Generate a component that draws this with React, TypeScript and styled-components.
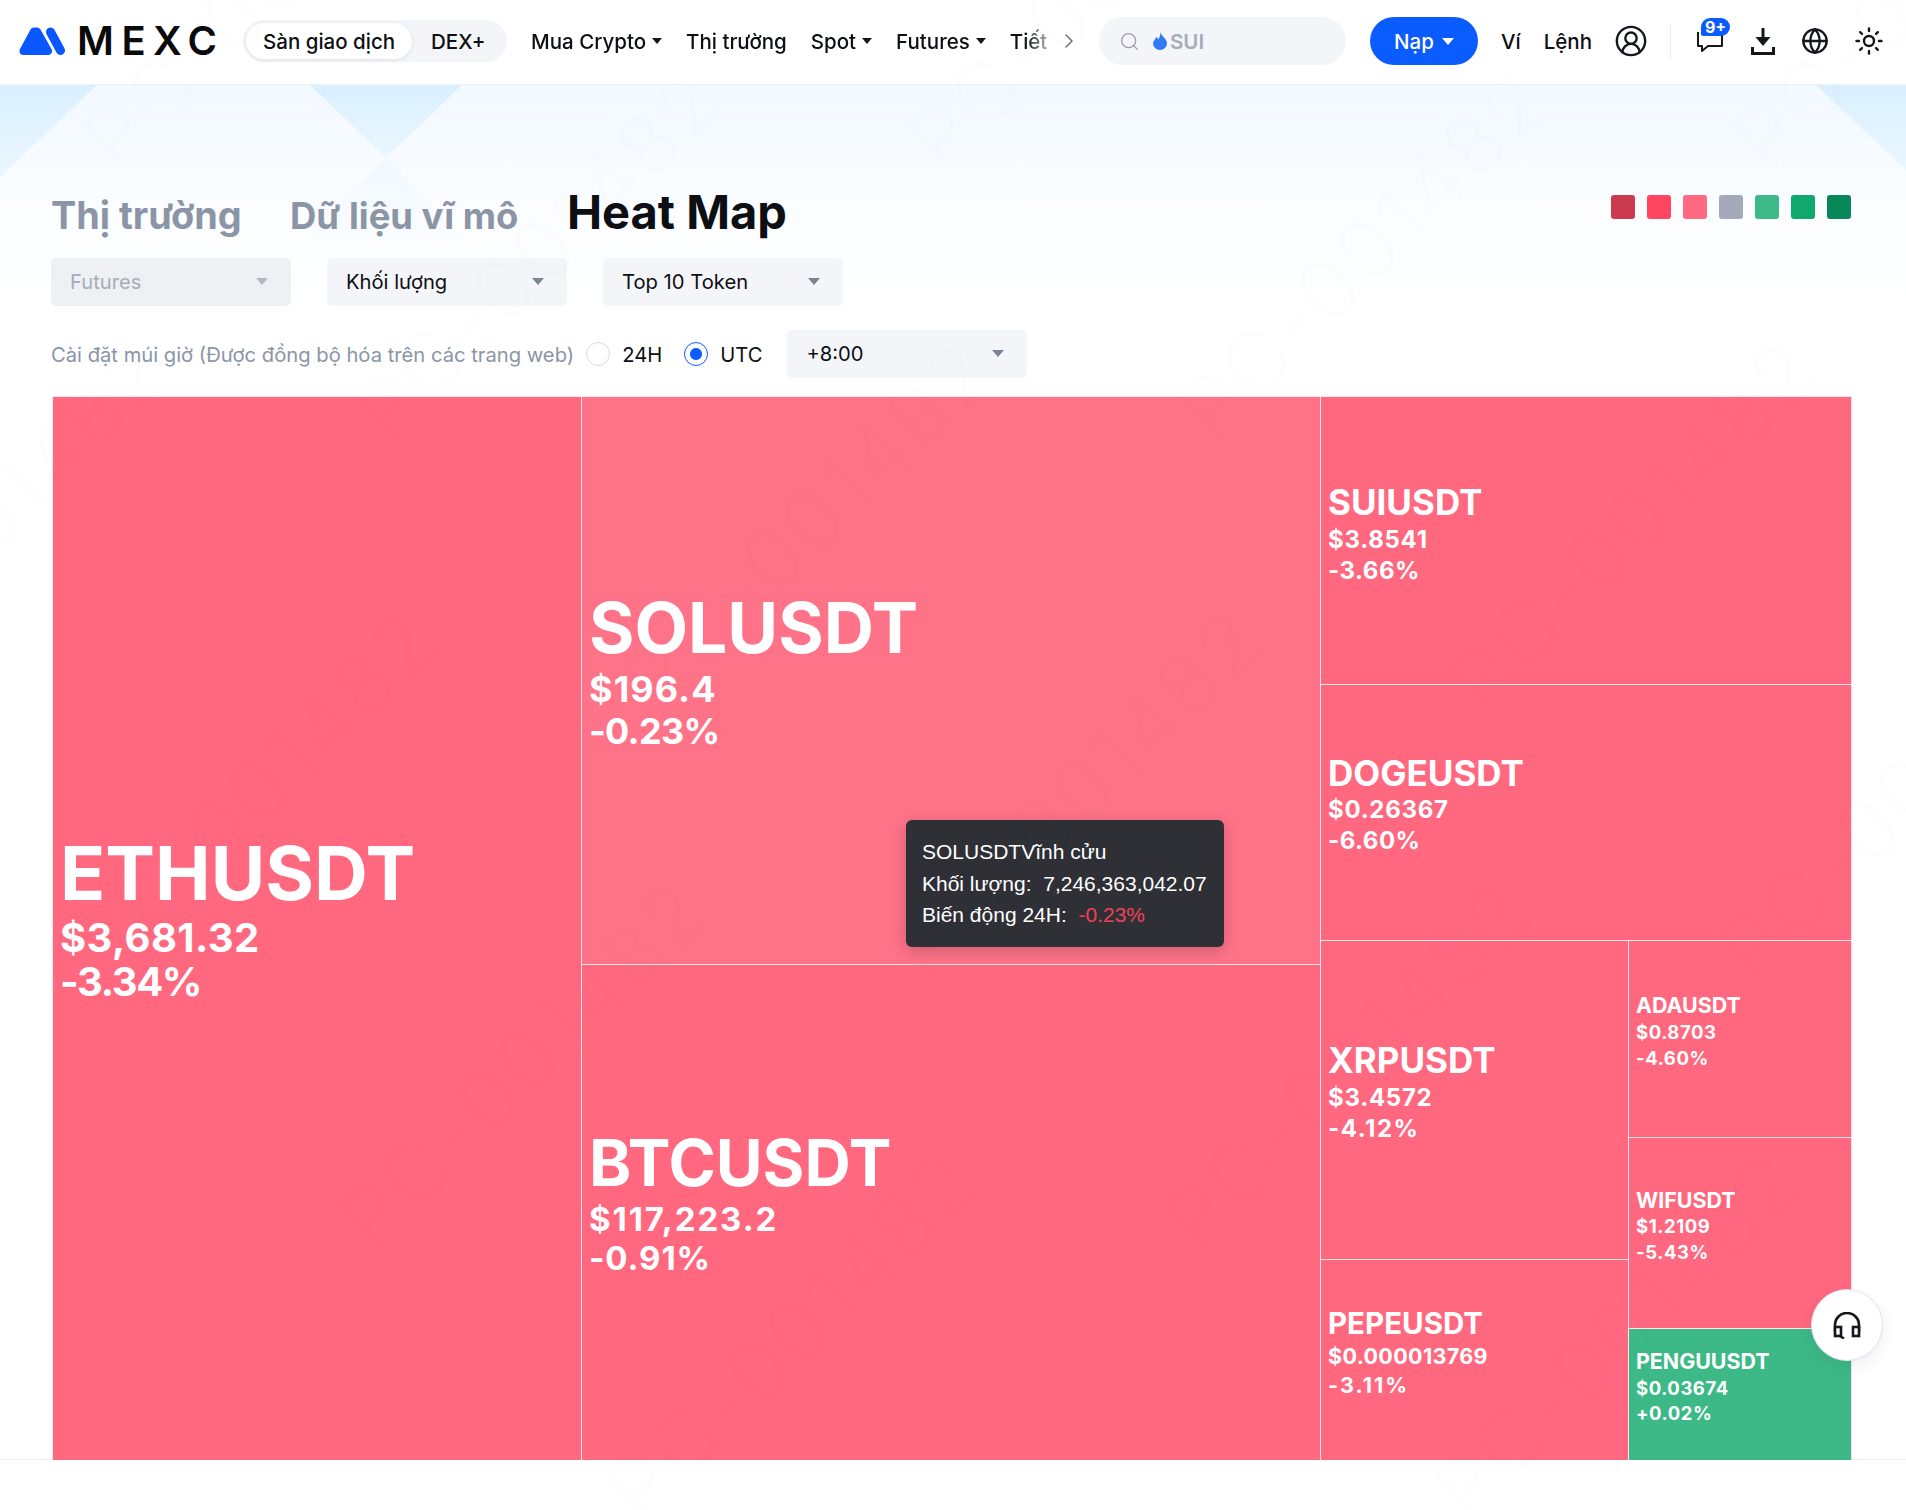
import styled, { createGlobalStyle } from "styled-components";
import { ChevronRight, CircleUserRound, Globe, Search, Sun } from "lucide-react";

const GlobalStyle = createGlobalStyle`
  html, body {
    margin: 0;
    padding: 0;
    background: #fff;
    overflow: hidden;
  }
  body {
    font-family: Inter, "Liberation Sans", sans-serif;
    color: #0d0f14;
  }
`;

const Page = styled.div`
  position: relative;
  width: 1906px;
  height: 1510px;
  overflow: hidden;
`;

const WatermarkLayer = styled.svg`
  position: absolute;
  inset: 0;
  z-index: 5;
  pointer-events: none;
  font-family: Inter, sans-serif;
  font-size: 84px;
  font-weight: 300;
  letter-spacing: 4px;
  fill: rgba(30, 40, 70, 0.007);
`;

/* top bar */
const HeaderBar = styled.header`
  position: relative;
  z-index: 2;
  display: flex;
  align-items: center;
  height: 85px;
  box-sizing: border-box;
  padding: 0 0 2px 19px;
  background: #fff;
  border-bottom: 1px solid #eef1f6;
  font-size: 20.5px;
  font-weight: 500;
`;

const LogoLink = styled.a`
  display: flex;
  align-items: center;
  gap: 11px;
  width: 224px;
`;

const WordMark = styled.span`
  font-size: 40px;
  line-height: 40px;
  font-weight: 600;
  letter-spacing: 7.5px;
  color: #0a0a0a;
`;

const MarketSwitch = styled.div`
  display: flex;
  align-items: center;
  width: 264px;
  height: 42px;
  box-sizing: border-box;
  padding: 3px;
  border-radius: 21px;
  background: #f4f5f9;
`;

const SwitchItem = styled.span<{ $active?: boolean }>`
  display: flex;
  align-items: center;
  justify-content: center;
  height: 36px;
  padding: 0 ${({ $active }) => ($active ? "17px" : "19px")};
  border-radius: 18px;
  white-space: nowrap;
  ${({ $active }) =>
    $active &&
    `
    background: #fff;
    box-shadow: 0 1px 4px rgba(30, 40, 70, 0.1);
  `}
`;

const NavList = styled.nav`
  display: flex;
  align-items: center;
  gap: 24px;
  width: 516px;
  margin-left: 24px;
  overflow: hidden;
  white-space: nowrap;
  mask-image: linear-gradient(to right, #000 calc(100% - 22px), rgba(0, 0, 0, 0.35));
`;

const NavItem = styled.span`
  display: flex;
  align-items: center;
  gap: 6px;
  flex-shrink: 0;
`;

const Caret = styled.i<{ $color?: string; $size?: number }>`
  display: block;
  width: 0;
  height: 0;
  border-left: ${({ $size = 5 }) => $size}px solid transparent;
  border-right: ${({ $size = 5 }) => $size}px solid transparent;
  border-top: ${({ $size = 5 }) => $size + 1}px solid ${({ $color = "#15171c" }) => $color};
`;

const NavMore = styled.span`
  display: flex;
  width: 42px;
  margin-left: 10px;
  color: #6d7280;
`;

const SearchBox = styled.div`
  display: flex;
  align-items: center;
  width: 247px;
  height: 48px;
  box-sizing: border-box;
  padding-left: 20px;
  border-radius: 24px;
  background: #f4f5f9;
  color: #a6acb9;
  font-weight: 600;
`;

const SearchHint = styled.span`
  display: flex;
  align-items: center;
  gap: 3px;
  margin-left: 13px;
`;

const DepositButton = styled.button`
  display: flex;
  align-items: center;
  justify-content: center;
  gap: 8px;
  width: 108px;
  height: 48px;
  margin-left: 24px;
  border: 0;
  border-radius: 24px;
  background: #0b5cff;
  color: #fff;
  font: inherit;
`;

const HeaderLink = styled.span<{ $gap: number }>`
  margin-left: ${({ $gap }) => $gap}px;
`;

const IconSlot = styled.span<{ $gap: number }>`
  position: relative;
  display: flex;
  margin-left: ${({ $gap }) => $gap}px;
`;

const Divider = styled.i`
  display: block;
  width: 1px;
  height: 35px;
  margin-left: 22px;
  background: #eff0f4;
`;

const CountBadge = styled.span`
  position: absolute;
  top: -13px;
  left: 4px;
  display: flex;
  align-items: center;
  justify-content: center;
  width: 29px;
  height: 18px;
  border-radius: 9px 9px 9px 2px;
  background: #0b5cff;
  color: #fff;
  font-size: 16px;
  font-weight: 700;
`;

/* page body */
const Main = styled.main`
  position: relative;
  height: 1374px;
  box-sizing: border-box;
  padding: 99px 55px 0 51px;
  background: linear-gradient(#f2f9ff 0, #fbfdff 130px, #fff 230px);
`;

const Decor = styled.svg`
  position: absolute;
  top: 0;
  left: 0;
  pointer-events: none;
`;

const TitleRow = styled.div`
  position: relative;
  display: flex;
  align-items: baseline;
  height: 74px;
`;

const Tab = styled.h2<{ $active?: boolean; $width?: number; $size: number }>`
  margin: 0;
  ${({ $width }) => $width && `width: ${$width}px;`}
  font-size: ${({ $size }) => $size}px;
  line-height: 56px;
  font-weight: 700;
  white-space: nowrap;
  color: ${({ $active }) => ($active ? "#0d0f14" : "#8b95a6")};
`;

const Legend = styled.div`
  display: flex;
  gap: 12px;
  align-self: flex-start;
  margin: 11px 0 0 auto;
`;

const Swatch = styled.i<{ $color: string }>`
  display: block;
  width: 24px;
  height: 24px;
  border-radius: 3px;
  background: ${({ $color }) => $color};
`;

const FilterRow = styled.div`
  position: relative;
  display: flex;
  gap: 36px;
`;

const Select = styled.div<{ $disabled?: boolean }>`
  display: flex;
  align-items: center;
  justify-content: space-between;
  width: 240px;
  height: 48px;
  box-sizing: border-box;
  padding: 0 23px 2px 19px;
  border-radius: 5px;
  font-size: 20.2px;
  background: ${({ $disabled }) => ($disabled ? "#eff0f4" : "#f4f5f9")};
  color: ${({ $disabled }) => ($disabled ? "#a6acb9" : "#0d0f14")};
`;

const TimezoneRow = styled.div`
  position: relative;
  display: flex;
  align-items: center;
  margin-top: 24px;
  font-size: 20.2px;
`;

const Muted = styled.span`
  color: #8b95a6;
  white-space: nowrap;
`;

const RadioLabel = styled.label<{ $gap: number }>`
  display: flex;
  align-items: center;
  gap: 12px;
  margin-left: ${({ $gap }) => $gap}px;
`;

const RadioDot = styled.i<{ $checked?: boolean }>`
  display: block;
  width: 24px;
  height: 24px;
  box-sizing: border-box;
  border-radius: 50%;
  border: 1px solid ${({ $checked }) => ($checked ? "#0b5cff" : "#d8dbe3")};
  background: ${({ $checked }) =>
    $checked ? "radial-gradient(circle, #0b5cff 0 5.5px, #fff 6.5px)" : "#fff"};
`;

const TimezoneSelect = styled(Select)`
  margin-left: 25px;
`;

/* treemap */
const TreeMap = styled.div`
  position: relative;
  display: flex;
  width: 1800px;
  height: 1064px;
  margin: 18px 0 0 1px;
  box-sizing: border-box;
  border-right: 1px solid #ffdfe4;
`;

const Stack = styled.div<{ $w?: number; $h?: number; $row?: boolean }>`
  display: flex;
  flex-direction: ${({ $row }) => ($row ? "row" : "column")};
  ${({ $w }) => ($w ? `width: ${$w}px; flex-shrink: 0;` : "flex: 1;")}
  ${({ $h }) => $h && `height: ${$h}px;`}
`;

const Tile = styled.div<{ $w?: number; $h?: number; $pad: number; $color: string }>`
  ${({ $w }) => $w && `width: ${$w}px;`}
  ${({ $h }) => ($h ? `height: ${$h}px;` : "flex: 1;")}
  flex-shrink: 0;
  box-sizing: border-box;
  padding: ${({ $pad }) => $pad}px 0 0 7px;
  border-left: 1px solid #ffe6ea;
  border-top: 1px solid #ffe6ea;
  background: ${({ $color }) => $color};
  color: #fff;
  font-weight: 700;
  white-space: nowrap;
`;

const TileName = styled.div<{ $size: number; $lh: number }>`
  font-size: ${({ $size }) => $size}px;
  line-height: ${({ $lh }) => $lh}px;
`;

const TileValue = styled.div<{ $size: number; $lh: number; $spacing: number }>`
  font-size: ${({ $size }) => $size}px;
  line-height: ${({ $lh }) => $lh}px;
  letter-spacing: ${({ $spacing }) => $spacing}em;
`;

const Tooltip = styled.div`
  position: absolute;
  left: 854px;
  top: 424px;
  z-index: 3;
  box-sizing: border-box;
  width: 318px;
  height: 127px;
  padding: 16px;
  border-radius: 6px;
  background: #2e3036;
  box-shadow: 0 4px 16px rgba(0, 0, 0, 0.2);
  color: #fff;
  font-family: "Liberation Sans", Arial, sans-serif;
  font-size: 21px;
  line-height: 31.5px;
  white-space: pre;
`;

const TooltipDown = styled.span`
  color: #f0405a;
`;

const Footer = styled.footer`
  height: 51px;
  box-sizing: border-box;
  border-top: 1px solid #eff0f4;
  background: #fff;
`;

const SupportButton = styled.button`
  position: absolute;
  left: 1811px;
  top: 1289px;
  z-index: 4;
  display: flex;
  align-items: center;
  justify-content: center;
  width: 72px;
  height: 72px;
  padding: 0;
  border: 1px solid #dfe1ef;
  border-radius: 50%;
  background: #fff;
  box-shadow: 0 6px 16px rgba(30, 40, 70, 0.08);
`;

const RED = "#ff687f";
const HOVER_RED = "#ff7389";
const GREEN = "#3cb987";

const swatches = ["#cc3a50", "#ff4560", "#ff6a80", "#a3a9b8", "#3eba88", "#0fa86d", "#088759"];

interface Coin {
  name: string;
  price: string;
  change: string;
  w?: number;
  h?: number;
  color?: string;
  pad: number;
  nameSize: number;
  nameLh: number;
  valueSize: number;
  valueLh: number;
  priceSpacing?: number;
  changeSpacing?: number;
}

const coins: Record<string, Coin> = {
  eth: { name: "ETHUSDT", price: "$3,681.32", change: "-3.34%", w: 529, h: 1064, pad: 434, nameSize: 74.5, nameLh: 85, valueSize: 40, valueLh: 44, priceSpacing: 0.01, changeSpacing: -0.035 },
  sol: { name: "SOLUSDT", price: "$196.4", change: "-0.23%", h: 568, color: HOVER_RED, pad: 192, nameSize: 69.5, nameLh: 79, valueSize: 36, valueLh: 42, priceSpacing: 0.03, changeSpacing: -0.02 },
  btc: { name: "BTCUSDT", price: "$117,223.2", change: "-0.91%", pad: 161, nameSize: 64, nameLh: 74, valueSize: 33, valueLh: 39, priceSpacing: 0.058, changeSpacing: 0.028 },
  sui: { name: "SUIUSDT", price: "$3.8541", change: "-3.66%", h: 288, pad: 83, nameSize: 35, nameLh: 44, valueSize: 24, valueLh: 31, changeSpacing: 0.02 },
  doge: { name: "DOGEUSDT", price: "$0.26367", change: "-6.60%", h: 256, pad: 67, nameSize: 35, nameLh: 42, valueSize: 24, valueLh: 31, changeSpacing: 0.02 },
  xrp: { name: "XRPUSDT", price: "$3.4572", change: "-4.12%", h: 319, pad: 97, nameSize: 35, nameLh: 44, valueSize: 24, valueLh: 31, changeSpacing: 0.063 },
  pepe: { name: "PEPEUSDT", price: "$0.000013769", change: "-3.11%", pad: 45, nameSize: 29.5, nameLh: 37, valueSize: 21.5, valueLh: 29, priceSpacing: 0.016, changeSpacing: 0.095 },
  ada: { name: "ADAUSDT", price: "$0.8703", change: "-4.60%", h: 197, pad: 50, nameSize: 21.4, nameLh: 28, valueSize: 18.5, valueLh: 26 },
  wif: { name: "WIFUSDT", price: "$1.2109", change: "-5.43%", h: 191, pad: 49, nameSize: 21.4, nameLh: 26, valueSize: 18.5, valueLh: 26 },
  pengu: { name: "PENGUUSDT", price: "$0.03674", change: "+0.02%", color: GREEN, pad: 18, nameSize: 21.4, nameLh: 29, valueSize: 18.5, valueLh: 25 },
};

function CoinTile({ coin }: { coin: Coin }) {
  return (
    <Tile $w={coin.w} $h={coin.h} $pad={coin.pad} $color={coin.color ?? RED}>
      <TileName $size={coin.nameSize} $lh={coin.nameLh}>
        {coin.name}
      </TileName>
      <TileValue $size={coin.valueSize} $lh={coin.valueLh} $spacing={coin.priceSpacing ?? 0.03}>
        {coin.price}
      </TileValue>
      <TileValue $size={coin.valueSize} $lh={coin.valueLh} $spacing={coin.changeSpacing ?? 0.03}>
        {coin.change}
      </TileValue>
    </Tile>
  );
}

function LogoMark() {
  return (
    <svg width="47" height="28" viewBox="0 0 47 28" fill="#0b57ff" stroke="#0b57ff">
      <path d="M4.5 24 L15 4.5 H18 L29 24 Z" strokeWidth="8" strokeLinejoin="round" />
      <path d="M31.5 5 L41.5 23.5" strokeWidth="9" strokeLinecap="round" fill="none" />
    </svg>
  );
}

function DropIcon() {
  return (
    <svg width="14" height="18" viewBox="0 0 14 18" fill="#2f7bf5">
      <path d="M7.5 0 C8 4 14 6.5 14 11.5 A7 6.5 0 0 1 0 11.5 C0 8.5 2.5 7 3.5 5 C4.5 6 5 6.5 5.2 7.5 C6.5 5.5 7.5 3 7.5 0 Z" />
    </svg>
  );
}

function ChatIcon() {
  return (
    <svg width="26" height="21" viewBox="0 0 26 21" fill="none" stroke="#15171c" strokeWidth="2">
      <path d="M1 1 V15 H5 V20 L11 15 H25 V1" strokeLinejoin="round" />
    </svg>
  );
}

function DownloadIcon() {
  return (
    <svg width="24" height="27" viewBox="0 0 24 27" fill="#15171c">
      <rect x="10.5" y="0" width="3" height="10" />
      <path d="M4.5 9 H19.5 L12 18 Z" />
      <path d="M0 19 H3 V24 H21 V19 H24 V27 H0 Z" />
    </svg>
  );
}

function HeadsetIcon() {
  return (
    <svg width="28" height="27" viewBox="0 0 28 27" fill="none" stroke="#15171c" strokeWidth="2.6">
      <path d="M2 20 V13 A12 12 0 0 1 26 13 V20" />
      <rect x="2" y="15" width="6" height="9" fill="#fff" />
      <rect x="20" y="15" width="6" height="9" fill="#fff" />
      <path d="M7 24 L11 26.5" />
    </svg>
  );
}

// faint account stamp repeated over the page
const stamps = Array.from({ length: 6 }, (_, row) => row).flatMap((row) =>
  [0, 1, 2, 3].map((col) => ({
    x: 120 - 825 + col * 825 + row * 270,
    y: 175 + row * 270,
  })),
);

export default function App() {
  return (
    <Page>
      <GlobalStyle />
      <HeaderBar>
        <LogoLink>
          <LogoMark />
          <WordMark>MEXC</WordMark>
        </LogoLink>
        <MarketSwitch>
          <SwitchItem $active>Sàn giao dịch</SwitchItem>
          <SwitchItem>DEX+</SwitchItem>
        </MarketSwitch>
        <NavList>
          <NavItem>
            Mua Crypto <Caret />
          </NavItem>
          <NavItem>Thị trường</NavItem>
          <NavItem>
            Spot <Caret />
          </NavItem>
          <NavItem>
            Futures <Caret />
          </NavItem>
          <NavItem>Tiết</NavItem>
        </NavList>
        <NavMore>
          <ChevronRight size={24} strokeWidth={1.5} />
        </NavMore>
        <SearchBox>
          <Search size={21} strokeWidth={1.5} color="#9aa1af" />
          <SearchHint>
            <DropIcon />
            SUI
          </SearchHint>
        </SearchBox>
        <DepositButton>
          Nạp <Caret $color="#fff" $size={6} />
        </DepositButton>
        <HeaderLink $gap={23}>Ví</HeaderLink>
        <HeaderLink $gap={23}>Lệnh</HeaderLink>
        <IconSlot $gap={22}>
          <CircleUserRound size={34} strokeWidth={1.7} color="#15171c" />
        </IconSlot>
        <Divider />
        <IconSlot $gap={26}>
          <ChatIcon />
          <CountBadge>9+</CountBadge>
        </IconSlot>
        <IconSlot $gap={28}>
          <DownloadIcon />
        </IconSlot>
        <IconSlot $gap={26}>
          <Globe size={28} strokeWidth={2} color="#15171c" />
        </IconSlot>
        <IconSlot $gap={25}>
          <Sun size={30} strokeWidth={1.9} color="#15171c" />
        </IconSlot>
      </HeaderBar>
      <Main>
        <Decor width="1906" height="300" viewBox="0 0 1906 300">
          <defs>
            <linearGradient id="corner" x1="0" y1="0" x2="0" y2="1">
              <stop offset="0" stopColor="#d9efff" />
              <stop offset="1" stopColor="#ebf7ff" />
            </linearGradient>
            <linearGradient id="reflect" x1="0" y1="0" x2="0" y2="1">
              <stop offset="0" stopColor="#f0f8ff" />
              <stop offset="1" stopColor="#ffffff" />
            </linearGradient>
          </defs>
          <path d="M0 0 H97 L0 92 Z" fill="url(#corner)" />
          <path d="M310 0 H462 L386 73 Z" fill="url(#corner)" />
          <path d="M1816 0 H1906 V85 Z" fill="url(#corner)" />
          <path d="M386 73 L500 190 H270 Z" fill="url(#reflect)" />
        </Decor>
        <TitleRow>
          <Tab $width={239} $size={37.8}>
            Thị trường
          </Tab>
          <Tab $width={277} $size={36.4}>
            Dữ liệu vĩ mô
          </Tab>
          <Tab $active $size={47}>
            Heat Map
          </Tab>
          <Legend>
            {swatches.map((color) => (
              <Swatch key={color} $color={color} />
            ))}
          </Legend>
        </TitleRow>
        <FilterRow>
          <Select $disabled>
            Futures <Caret $color="#b3b8c4" $size={6} />
          </Select>
          <Select>
            Khối lượng <Caret $color="#7c8494" $size={6} />
          </Select>
          <Select>
            Top 10 Token <Caret $color="#7c8494" $size={6} />
          </Select>
        </FilterRow>
        <TimezoneRow>
          <Muted>Cài đặt múi giờ (Được đồng bộ hóa trên các trang web)</Muted>
          <RadioLabel $gap={12}>
            <RadioDot />
            24H
          </RadioLabel>
          <RadioLabel $gap={22}>
            <RadioDot $checked />
            UTC
          </RadioLabel>
          <TimezoneSelect>
            +8:00 <Caret $color="#7c8494" $size={6} />
          </TimezoneSelect>
        </TimezoneRow>
        <TreeMap>
          <CoinTile coin={coins.eth} />
          <Stack $w={739}>
            <CoinTile coin={coins.sol} />
            <CoinTile coin={coins.btc} />
          </Stack>
          <Stack>
            <CoinTile coin={coins.sui} />
            <CoinTile coin={coins.doge} />
            <Stack $row $h={520}>
              <Stack $w={308}>
                <CoinTile coin={coins.xrp} />
                <CoinTile coin={coins.pepe} />
              </Stack>
              <Stack>
                <CoinTile coin={coins.ada} />
                <CoinTile coin={coins.wif} />
                <CoinTile coin={coins.pengu} />
              </Stack>
            </Stack>
          </Stack>
          <Tooltip>
            {"SOLUSDTVĩnh cửu\nKhối lượng:  7,246,363,042.07\nBiến động 24H:  "}
            <TooltipDown>-0.23%</TooltipDown>
          </Tooltip>
        </TreeMap>
      </Main>
      <Footer />
      <SupportButton>
        <HeadsetIcon />
      </SupportButton>
      <WatermarkLayer width="1906" height="1510" viewBox="0 0 1906 1510">
        {stamps.map(({ x, y }) => (
          <text key={`${x}-${y}`} x={x} y={y} transform={`rotate(-45 ${x} ${y})`}>
            PC-001482
          </text>
        ))}
      </WatermarkLayer>
    </Page>
  );
}
